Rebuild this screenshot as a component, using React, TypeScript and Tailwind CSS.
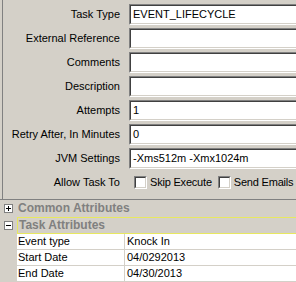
import React from 'react';

const font = { fontFamily: '"Liberation Sans", Arial, sans-serif' };

function Field({ label, value }: { label: string; value?: string }) {
  return (
    <div className="flex items-center h-[21px]">
      <div className="w-[117px] shrink-0 text-right text-[11px] text-black whitespace-nowrap">{label}</div>
      <div className="ml-[9px] flex-1 h-[21px] border-t border-l border-[#808080] border-b border-b-white bg-white">
        <div className="h-full border-t border-l border-[#404040] border-b border-b-[#d4d0c8] pl-[2px] text-[11px] leading-[17px] text-black whitespace-nowrap">
          {value}
        </div>
      </div>
    </div>
  );
}

function Check({ label }: { label: string }) {
  return (
    <div className="flex items-center gap-[3px] shrink-0">
      <div className="w-[13px] h-[13px] shrink-0 border-t border-l border-[#808080] border-b border-r border-b-white border-r-white bg-white">
        <div className="w-full h-full border-t border-l border-[#404040] border-b border-r border-b-[#d4d0c8] border-r-[#d4d0c8]" />
      </div>
      <span className="text-[11px] tracking-[-0.2px] text-black whitespace-nowrap">{label}</span>
    </div>
  );
}

function Category({ label, open, focus }: { label: string; open?: boolean; focus?: boolean }) {
  return (
    <div className="flex h-[17px] bg-[#d4d0c8]">
      <div className="w-[17px] flex items-center justify-center">
        <div className="w-[9px] h-[9px] border border-[#808080] bg-white flex items-center justify-center relative">
          <div className="absolute w-[5px] h-[1px] bg-black" />
          {!open && <div className="absolute w-[1px] h-[5px] bg-black" />}
        </div>
      </div>
      <div
        className={
          'flex-1 pl-[1px] text-[12px] font-bold text-[#808080] leading-[15px] whitespace-nowrap ' +
          (focus ? 'border-t border-b border-l border-[#e8e860]' : 'border-t border-b border-transparent')
        }
      >
        {label}
      </div>
    </div>
  );
}

function Prop({ name, value }: { name: string; value: string }) {
  return (
    <div className="flex h-[16px] bg-[#d4d0c8]">
      <div className="w-[17px]" />
      <div className="flex flex-1 bg-white border-b border-[#d4d0c8] text-[11px] text-black leading-[15px]">
        <div className="w-[108px] pl-[1px] border-r border-[#d4d0c8]">{name}</div>
        <div className="flex-1 pl-[2px]">{value}</div>
      </div>
    </div>
  );
}

export default function App() {
  return (
    <div className="w-[296px] h-[282px] bg-[#d4d0c8] overflow-hidden flex flex-col" style={font}>
      <div className="flex-1 ml-[2px] border-l border-[#808080] pt-[4px] flex flex-col gap-[3px]">
        <Field label="Task Type" value="EVENT_LIFECYCLE" />
        <Field label="External Reference" />
        <Field label="Comments" />
        <Field label="Description" />
        <Field label="Attempts" value="1" />
        <Field label="Retry After, In Minutes" value="0" />
        <Field label="JVM Settings" value="-Xms512m -Xmx1024m" />
        <div className="flex items-center h-[21px]">
          <div className="w-[117px] shrink-0 text-right text-[11px] text-black whitespace-nowrap">Allow Task To</div>
          <div className="ml-[14px] flex items-center gap-[6px]">
            <Check label="Skip Execute" />
            <Check label="Send Emails" />
          </div>
        </div>
      </div>
      <div className="h-[83px] border-t border-[#808080] flex flex-col">
        <Category label="Common Attributes" />
        <Category label="Task Attributes" open focus />
        <Prop name="Event type" value="Knock In" />
        <Prop name="Start Date" value="04/0292013" />
        <Prop name="End Date" value="04/30/2013" />
      </div>
    </div>
  );
}
